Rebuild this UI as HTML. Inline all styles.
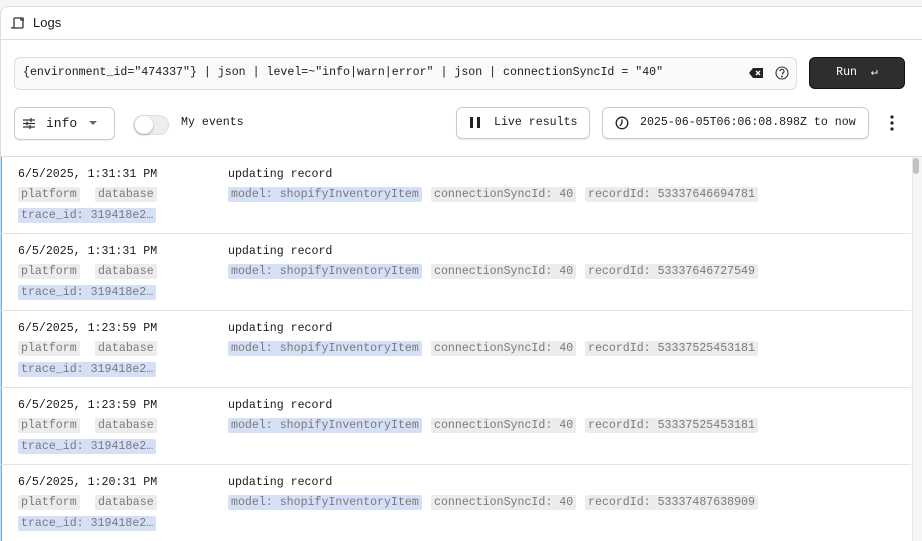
<!DOCTYPE html>
<html><head><style>
*{box-sizing:border-box;margin:0;padding:0}
html,body{width:922px;height:541px;overflow:hidden}
body{background:#f5f5f5;font-family:"Liberation Mono",monospace;font-size:11.6px;color:#1a1a1a;position:relative}
.card{position:absolute;left:0;top:6px;width:922px;height:535px;background:#fff;border:1px solid #ddd;border-right:none;border-bottom:none;border-radius:8px 0 0 0;overflow:hidden}
.hdr{position:absolute;left:0;top:0;width:100%;height:33px;border-bottom:1px solid #ddd;font-family:"Liberation Sans",sans-serif;font-size:13px}
.abs{position:absolute;white-space:nowrap}
.input{left:13px;top:50px;width:783px;height:33px;border:1px solid #ddd;border-radius:6px;background:#fafafa}
.btn{border:1px solid #ccc;border-radius:6px;background:#fff;box-shadow:0 1px 1px rgba(0,0,0,.08)}
.tag{position:absolute;height:15px;line-height:15px;padding:0 3px;border-radius:2px;background:#ececec;color:#7a7a7a;white-space:nowrap}
.blue{background:#d5e0f7}
.row{position:absolute;left:0;width:910px;height:77px;border-bottom:1px solid #e2e2e2}
</style></head><body>
<div class="card">
<div class="hdr">
<svg class="abs" style="left:10px;top:9px" width="14" height="14" viewBox="0 0 14 14" fill="none" stroke="#333" stroke-width="1.3"><path d="M3 2h9v9M3 2v10H1v-1M3 12h8a1 1 0 0 0 1-1"/><path d="M10 2v2h3"/></svg>
<span class="abs" style="left:32px;top:8px">Logs</span>
</div>
<div class="abs input"></div>
<span class="abs" style="left:22px;top:59px">{environment_id="474337"} | json | level=~"info|warn|error" | json | connectionSyncId = "40"</span>
<svg class="abs" style="left:748px;top:61px" width="14" height="10" viewBox="0 0 14 10"><path d="M4 0h10v10H4L0 5z" fill="#222"/><path d="M7 3l4 4M11 3l-4 4" stroke="#fff" stroke-width="1.4"/></svg>
<svg class="abs" style="left:774px;top:59px" width="14" height="14" viewBox="0 0 14 14" fill="none" stroke="#333" stroke-width="1.1"><circle cx="7" cy="7" r="6"/><path d="M5 5.3a2 2 0 1 1 2.5 1.9v1.3"/><circle cx="7" cy="10.5" r=".4" fill="#333"/></svg>
<div class="abs" style="left:808px;top:50px;width:96px;height:32px;background:#2e2e2e;border-radius:6px;border:1px solid #111;color:#fff;text-align:center;line-height:30px">Run&nbsp; ↵</div>
<div class="abs btn" style="left:13px;top:100px;width:101px;height:33px"></div>
<svg class="abs" style="left:22px;top:111px" width="12" height="11" viewBox="0 0 12 11" stroke="#333" stroke-width="1.3"><path d="M0 2h12M0 5.5h12M0 9h12"/><path d="M8 0v4M4 3.5v4M7 7v4"/></svg>
<span class="abs" style="left:45px;top:109px;font-size:13px">info</span>
<svg class="abs" style="left:88px;top:114px" width="8" height="5"><path d="M0 0h8L4 4z" fill="#666"/></svg>
<div class="abs" style="left:132px;top:108px;width:36px;height:20px;border-radius:10px;background:#eee;border:1px solid #ddd"></div>
<div class="abs" style="left:134px;top:109px;width:18px;height:18px;border-radius:9px;background:#fff;box-shadow:0 1px 2px rgba(0,0,0,.3)"></div>
<span class="abs" style="left:180px;top:109px">My events</span>
<div class="abs btn" style="left:455px;top:100px;width:134px;height:32px"></div>
<div class="abs" style="left:469px;top:110px;width:3px;height:11px;background:#222"></div>
<div class="abs" style="left:476px;top:110px;width:3px;height:11px;background:#222"></div>
<span class="abs" style="left:493px;top:109px">Live results</span>
<div class="abs btn" style="left:601px;top:100px;width:267px;height:32px"></div>
<svg class="abs" style="left:614px;top:109px" width="14" height="14" viewBox="0 0 14 14" fill="none" stroke="#222" stroke-width="1.3"><circle cx="7" cy="7" r="5.8"/><path d="M7 3.5V7l-2 3"/></svg>
<span class="abs" style="left:639px;top:109px">2025-06-05T06:06:08.898Z to now</span>
<svg class="abs" style="left:889px;top:108px" width="4" height="16"><circle cx="2" cy="2" r="1.6" fill="#222"/><circle cx="2" cy="8" r="1.6" fill="#222"/><circle cx="2" cy="14" r="1.6" fill="#222"/></svg>
<div class="abs" style="left:0;top:149px;width:922px;border-top:1px solid #ddd;height:400px;overflow:hidden">
<div class="abs" style="left:-1px;top:0;width:2px;height:400px;background:#5ab0f0"></div>
<div class="abs" style="left:911px;top:0;width:11px;height:400px;background:#f5f5f5;border-left:1px solid #e5e5e5"></div>
<div class="abs" style="left:912px;top:1px;width:6px;height:16px;border-radius:3px;background:#c2c2c2"></div>
<div class="row" style="top:0">
<span class="abs" style="left:17px;top:11px">6/5/2025, 1:31:31 PM</span><span class="abs" style="left:227px;top:11px">updating record</span>
<span class="tag" style="left:17px;top:30px">platform</span><span class="tag" style="left:94px;top:30px">database</span><span class="tag blue" style="left:17px;top:51px">trace_id: 319418e2…</span>
<span class="tag blue" style="left:227px;top:30px">model: shopifyInventoryItem</span><span class="tag" style="left:430px;top:30px">connectionSyncId: 40</span><span class="tag" style="left:584px;top:30px">recordId: 53337646694781</span></div>
<div class="row" style="top:77px">
<span class="abs" style="left:17px;top:11px">6/5/2025, 1:31:31 PM</span><span class="abs" style="left:227px;top:11px">updating record</span>
<span class="tag" style="left:17px;top:30px">platform</span><span class="tag" style="left:94px;top:30px">database</span><span class="tag blue" style="left:17px;top:51px">trace_id: 319418e2…</span>
<span class="tag blue" style="left:227px;top:30px">model: shopifyInventoryItem</span><span class="tag" style="left:430px;top:30px">connectionSyncId: 40</span><span class="tag" style="left:584px;top:30px">recordId: 53337646727549</span></div>
<div class="row" style="top:154px">
<span class="abs" style="left:17px;top:11px">6/5/2025, 1:23:59 PM</span><span class="abs" style="left:227px;top:11px">updating record</span>
<span class="tag" style="left:17px;top:30px">platform</span><span class="tag" style="left:94px;top:30px">database</span><span class="tag blue" style="left:17px;top:51px">trace_id: 319418e2…</span>
<span class="tag blue" style="left:227px;top:30px">model: shopifyInventoryItem</span><span class="tag" style="left:430px;top:30px">connectionSyncId: 40</span><span class="tag" style="left:584px;top:30px">recordId: 53337525453181</span></div>
<div class="row" style="top:231px">
<span class="abs" style="left:17px;top:11px">6/5/2025, 1:23:59 PM</span><span class="abs" style="left:227px;top:11px">updating record</span>
<span class="tag" style="left:17px;top:30px">platform</span><span class="tag" style="left:94px;top:30px">database</span><span class="tag blue" style="left:17px;top:51px">trace_id: 319418e2…</span>
<span class="tag blue" style="left:227px;top:30px">model: shopifyInventoryItem</span><span class="tag" style="left:430px;top:30px">connectionSyncId: 40</span><span class="tag" style="left:584px;top:30px">recordId: 53337525453181</span></div>
<div class="row" style="top:308px">
<span class="abs" style="left:17px;top:11px">6/5/2025, 1:20:31 PM</span><span class="abs" style="left:227px;top:11px">updating record</span>
<span class="tag" style="left:17px;top:30px">platform</span><span class="tag" style="left:94px;top:30px">database</span><span class="tag blue" style="left:17px;top:51px">trace_id: 319418e2…</span>
<span class="tag blue" style="left:227px;top:30px">model: shopifyInventoryItem</span><span class="tag" style="left:430px;top:30px">connectionSyncId: 40</span><span class="tag" style="left:584px;top:30px">recordId: 53337487638909</span></div>
</div>
</div>
</body></html>
